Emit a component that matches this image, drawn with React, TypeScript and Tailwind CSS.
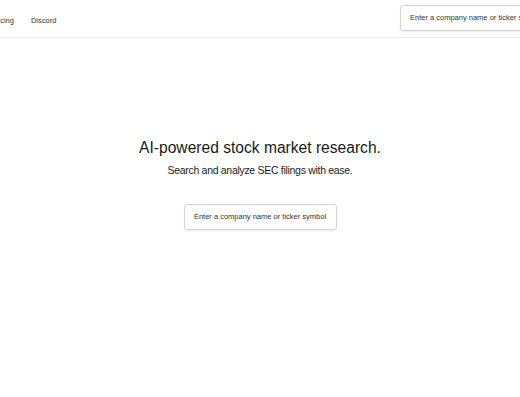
export default function App() {
  return (
    <div className="w-[520px] h-[397px] overflow-hidden bg-white text-[#1f1f1f]" style={{ fontFamily: '"Liberation Sans", Arial, sans-serif' }}>
      <header className="h-[38px] border-b border-[#ececec] flex items-center">
        <nav className="flex items-center gap-[17px] ml-[-9px] mt-[4px] text-[7.5px] text-[#333]">
          <span>Pricing</span>
          <span>Discord</span>
        </nav>
        <div className="ml-auto mr-[-60px] w-[180px] h-[26px] mt-[-1px] border border-[#d4d4d4] rounded-[3px] shadow-[0_1px_2px_rgba(0,0,0,0.08)] flex items-center px-[9px] text-[7.5px] text-[#333] whitespace-nowrap">
          Enter a company name or ticker symbol
        </div>
      </header>
      <main className="flex flex-col items-center pt-[100px]">
        <h1 className="text-[15.6px] leading-[20px] text-[#1a1a1a]">AI-powered stock market research.</h1>
        <p className="mt-[5px] text-[10.5px] leading-[14px] tracking-[-0.3px] text-[#222]">Search and analyze SEC filings with ease.</p>
        <div className="mt-[27px] w-[153px] h-[26px] border border-[#d4d4d4] rounded-[3px] shadow-[0_1px_2px_rgba(0,0,0,0.08)] flex items-center justify-center text-[7.5px] text-[#333] whitespace-nowrap">
          Enter a company name or ticker symbol
        </div>
      </main>
    </div>
  );
}
